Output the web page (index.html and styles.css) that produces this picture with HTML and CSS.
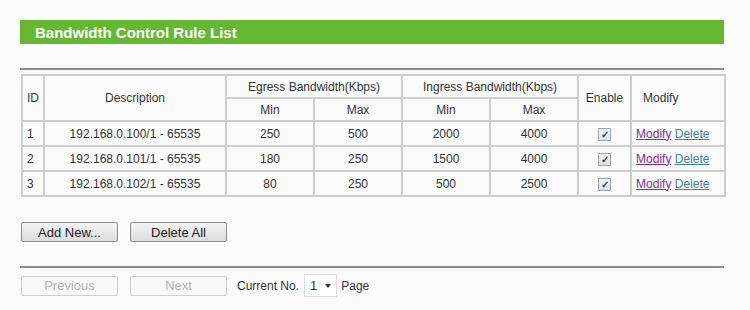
FILE: index.html
```html
<!DOCTYPE html>
<html lang="en">
<head>
  <meta charset="UTF-8">
  <title>Bandwidth Control Rule List</title>
  <link rel="stylesheet" href="styles.css">
</head>
<body>
  <div class="panel">
    <div class="title-bar">Bandwidth Control Rule List</div>

    <div class="rule-line"></div>

    <table class="rules">
      <colgroup>
        <col class="c-id"><col class="c-desc"><col class="c-num"><col class="c-num"><col class="c-num"><col class="c-num"><col class="c-en"><col class="c-mod">
      </colgroup>
      <thead>
        <tr>
          <th rowspan="2" class="left">ID</th>
          <th rowspan="2">Description</th>
          <th colspan="2">Egress Bandwidth(Kbps)</th>
          <th colspan="2">Ingress Bandwidth(Kbps)</th>
          <th rowspan="2">Enable</th>
          <th rowspan="2" class="left pad">Modify</th>
        </tr>
        <tr>
          <th>Min</th><th>Max</th><th>Min</th><th>Max</th>
        </tr>
      </thead>
      <tbody>
        <tr>
          <td class="left">1</td><td>192.168.0.100/1 - 65535</td>
          <td>250</td><td>500</td><td>2000</td><td>4000</td>
          <td><span class="check">&#10003;</span></td>
          <td class="left"><a href="#" class="mod">Modify</a> <a href="#" class="del">Delete</a></td>
        </tr>
        <tr>
          <td class="left">2</td><td>192.168.0.101/1 - 65535</td>
          <td>180</td><td>250</td><td>1500</td><td>4000</td>
          <td><span class="check">&#10003;</span></td>
          <td class="left"><a href="#" class="mod">Modify</a> <a href="#" class="del">Delete</a></td>
        </tr>
        <tr>
          <td class="left">3</td><td>192.168.0.102/1 - 65535</td>
          <td>80</td><td>250</td><td>500</td><td>2500</td>
          <td><span class="check">&#10003;</span></td>
          <td class="left"><a href="#" class="mod">Modify</a> <a href="#" class="del">Delete</a></td>
        </tr>
      </tbody>
    </table>

    <div class="actions">
      <button class="btn">Add New...</button>
      <button class="btn">Delete All</button>
    </div>

    <div class="rule-line"></div>

    <div class="pager">
      <button class="btn" disabled>Previous</button>
      <button class="btn" disabled>Next</button>
      <span class="pager-text">Current No.</span>
      <span class="page-select">1<span class="arrow"></span></span>
      <span class="pager-text">Page</span>
    </div>
  </div>
</body>
</html>
```

FILE: styles.css
```css
body {
  font-family: Arial, "Liberation Sans", sans-serif;
  background: #fbfbfb;
  margin: 0;
  padding: 0;
  color: #333;
}
.panel {
  width: 704px;
  margin-left: 20px;
  padding-top: 20px;
}
.title-bar {
  background: #66b834;
  color: white;
  font-weight: bold;
  font-size: 15px;
  height: 24px;
  line-height: 25px;
  padding-left: 15px;
}
.rule-line {
  height: 2px;
  background: #7d9286;
  margin-top: 24px;
}
.rules {
  margin-top: 4px;
  margin-left: 1px;
  width: 703px;
  table-layout: fixed;
  border-collapse: separate;
  border-spacing: 0;
  border: 1px solid #cdcdcd;
  font-size: 12px;
}
.c-id { width: 22px; }
.c-desc { width: 182px; }
.c-num { width: 88px; }
.c-en { width: 53px; }
.c-mod { width: 94px; }
.rules th, .rules td {
  border: 1px solid #cdcdcd;
  text-align: center;
  padding: 0;
  height: 21px;
  color: #333;
}
.rules th {
  font-weight: normal;
  font-size: 12px;
}
.rules td {
  height: 23px;
}
.rules .left {
  text-align: left;
  padding-left: 4px;
}
.rules .pad {
  padding-left: 11px;
}
.check {
  display: inline-block;
  width: 11px;
  height: 11px;
  border: 1px solid #9aa6b5;
  background: linear-gradient(#f2f4f7, #dde2e9);
  color: #2d3f66;
  font-size: 10px;
  line-height: 11px;
  text-align: center;
  vertical-align: middle;
  font-weight: bold;
}
a.mod {
  color: #8a2a8f;
}
a.del {
  color: #3a80ab;
}
.actions {
  display: flex;
  gap: 12px;
  margin: 25px 0 24px 1px;
}
.btn {
  width: 97px;
  height: 20px;
  padding: 0;
  font-family: Arial, "Liberation Sans", sans-serif;
  font-size: 13px;
  color: #222;
  border: 1px solid #8a8a8a;
  border-radius: 2px;
  background: linear-gradient(#f4f4f4, #dcdcdc);
}
.btn:disabled {
  color: #b4b4b4;
  border-color: #cfcfcf;
  background: #f9f9f9;
}
.pager {
  display: flex;
  align-items: center;
  gap: 12px;
  margin: 6px 0 0 1px;
  font-size: 12px;
}
.pager .btn + .pager-text {
  margin-left: -2px;
}
.page-select {
  display: inline-flex;
  align-items: center;
  gap: 8px;
  height: 21px;
  padding: 0 5px;
  border: 1px solid #dcdcdc;
  background: white;
  font-size: 13px;
  margin-left: -7px;
  margin-right: -8px;
}
.arrow {
  width: 0;
  height: 0;
  border-left: 3px solid transparent;
  border-right: 3px solid transparent;
  border-top: 4px solid #333;
}
```
